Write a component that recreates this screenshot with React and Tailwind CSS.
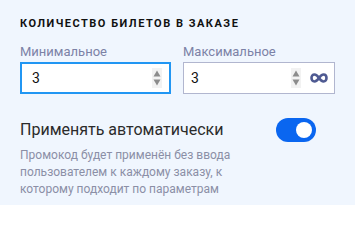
import React from "react";

function Spinner() {
  return (
    <div className="flex flex-col items-center justify-center gap-[2px] w-[10px] h-[20px] bg-[#f2f2f2]">
      <svg width="8" height="7" viewBox="0 0 8 7"><path d="M4 0.5 L7.5 6.5 L0.5 6.5 Z" fill="#8c8c8c" /></svg>
      <svg width="8" height="7" viewBox="0 0 8 7"><path d="M0.5 0.5 L7.5 0.5 L4 6.5 Z" fill="#8c8c8c" /></svg>
    </div>
  );
}

function Infinity() {
  return (
    <svg width="18" height="10" viewBox="0 0 18 10">
      <path d="M9 5 C7 2 5.5 1.5 4.5 1.5 C2.6 1.5 1.5 3 1.5 5 C1.5 7 2.6 8.5 4.5 8.5 C5.5 8.5 7 8 9 5 C11 2 12.5 1.5 13.5 1.5 C15.4 1.5 16.5 3 16.5 5 C16.5 7 15.4 8.5 13.5 8.5 C12.5 8.5 11 8 9 5 Z" fill="none" stroke="#4f5a92" strokeWidth="2.6" />
    </svg>
  );
}

export default function App() {
  return (
    <div className="w-[355px] h-[205px] bg-[#f0f6fe] px-5 pt-[17px] overflow-hidden" style={{ fontFamily: "Roboto, 'Noto Sans', sans-serif" }}>
      <div className="text-[11px] leading-[14px] font-bold tracking-[1.5px] text-[#111]">КОЛИЧЕСТВО БИЛЕТОВ В ЗАКАЗЕ</div>
      <div className="mt-[13px] flex gap-3">
        <div className="w-[153px]">
          <div className="text-[13px] leading-[16px] text-[#7c82a6]">Минимальное</div>
          <div className="mt-[2px] h-[32px] border-2 border-[#2196f3] bg-white flex items-center pl-[10px] pr-[7px]">
            <span className="flex-1 text-[14px] text-[#111]">3</span>
            <Spinner />
          </div>
        </div>
        <div className="w-[154px]">
          <div className="text-[13px] leading-[16px] text-[#7c82a6]">Максимальное</div>
          <div className="mt-[2px] h-[32px] border border-[#b1b6cf] bg-white flex items-center pl-[7px] pr-[5px]">
            <span className="flex-1 text-[14px] text-[#111]">3</span>
            <Spinner />
            <div className="ml-[9px] mr-[1px]"><Infinity /></div>
          </div>
        </div>
      </div>
      <div className="mt-[24px] flex items-center justify-between w-[296px]">
        <div className="text-[16px] leading-[20px] text-[#2b2b2b]">Применять автоматически</div>
        <div className="w-[40px] h-[24px] rounded-full bg-[#0a66f0] flex items-center justify-end pr-[4px]">
          <div className="w-[16px] h-[16px] rounded-full bg-white" />
        </div>
      </div>
      <div className="mt-[5px] w-[240px] text-[12px] leading-[17px] text-[#8b8fa6]">
        Промокод будет применён без ввода пользователем к каждому заказу, к которому подходит по параметрам
      </div>
    </div>
  );
}
